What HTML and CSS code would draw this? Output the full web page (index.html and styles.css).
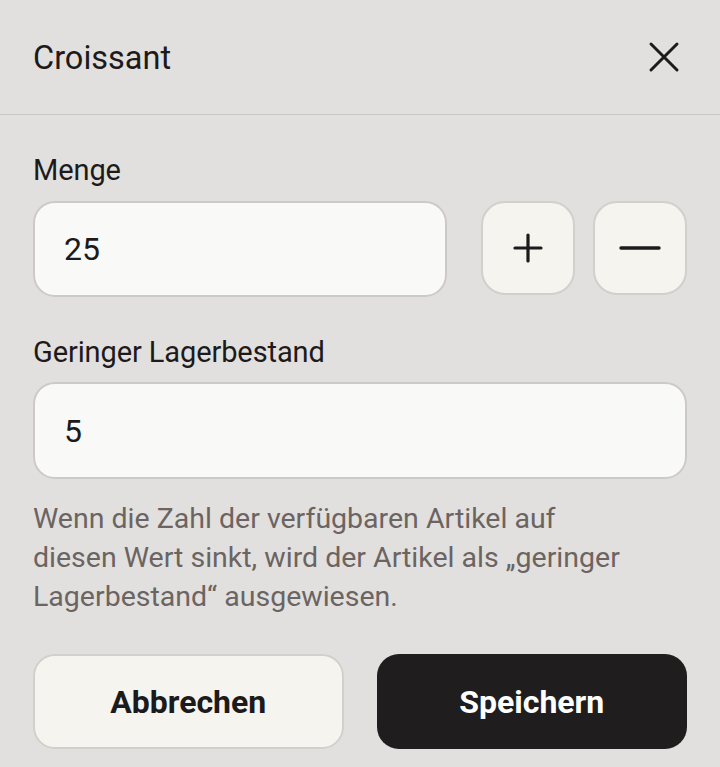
FILE: index.html
```html
<!DOCTYPE html>
<html lang="de">
<head>
<meta charset="utf-8">
<title>Croissant</title>
<link rel="stylesheet" href="styles.css">
</head>
<body>
<div class="sheet">
  <header class="sheet-header">
    <h1 class="title">Croissant</h1>
    <button class="close" aria-label="Schließen">
      <svg width="32" height="32" viewBox="0 0 32 32"><path d="M3 3 L29 29 M29 3 L3 29" stroke="#1c1a1a" stroke-width="3" stroke-linecap="round" fill="none"/></svg>
    </button>
  </header>
  <main class="content">
    <label class="label label-first">Menge</label>
    <div class="qty-row">
      <div class="field field-qty">25</div>
      <button class="step" aria-label="Erhöhen">
        <svg width="30" height="30" viewBox="0 0 30 30"><path d="M2 15 H28 M15 2 V28" stroke="#1c1a1a" stroke-width="3.2" stroke-linecap="round" fill="none"/></svg>
      </button>
      <button class="step" aria-label="Verringern">
        <svg width="42" height="6" viewBox="0 0 42 6"><path d="M2 3 H40" stroke="#1c1a1a" stroke-width="3.4" stroke-linecap="round" fill="none"/></svg>
      </button>
    </div>
    <label class="label label-second">Geringer Lagerbestand</label>
    <div class="field field-wide">5</div>
    <p class="hint">Wenn die Zahl der verfügbaren Artikel auf diesen Wert sinkt, wird der Artikel als „geringer Lagerbestand“ ausgewiesen.</p>
    <div class="actions">
      <button class="btn btn-secondary">Abbrechen</button>
      <button class="btn btn-primary">Speichern</button>
    </div>
  </main>
</div>
</body>
</html>
```

FILE: styles.css
```css
* { box-sizing: border-box; }
html, body { margin: 0; padding: 0; }
body {
  background: #e2e0de;
  font-family: Roboto, "Liberation Sans", sans-serif;
  color: #1c1a1a;
  width: 720px;
  height: 767px;
  overflow: hidden;
}
.sheet-header {
  height: 115px;
  padding: 0 40px 0 33px;
  display: flex;
  align-items: center;
  justify-content: space-between;
  border-bottom: 1px solid #c9c7c5;
}
.title {
  margin: 0;
  font-size: 32.5px;
  font-weight: 400;
  letter-spacing: 0;
  padding-top: 1px;
}
.close {
  border: 0;
  background: none;
  padding: 0;
  width: 32px;
  height: 32px;
  display: flex;
}
.content {
  padding: 0 33px;
  display: flex;
  flex-direction: column;
}
.label {
  font-size: 29px;
  line-height: 34px;
  letter-spacing: -0.1px;
  color: #1c1a1a;
}
.label-first { margin-top: 38px; }
.label-second { margin-top: 38px; }
.qty-row {
  margin-top: 14px;
  display: flex;
  align-items: flex-start;
}
.field {
  height: 96px;
  background: #f9f9f7;
  border: 2px solid #cdcac6;
  border-radius: 22px;
  padding: 0 29px;
  display: flex;
  align-items: center;
  font-size: 32px;
  color: #1c1a1a;
}
.field-qty { width: 414px; }
.field-wide { margin-top: 13px; height: 97px; }
.step {
  width: 94px;
  height: 94px;
  margin-left: 34px;
  border: 2px solid #d3d0cb;
  border-radius: 24px;
  background: #f5f4ef;
  display: flex;
  align-items: center;
  justify-content: center;
  padding: 0;
}
.step + .step { margin-left: 18px; }
.hint {
  margin: 20px 0 0;
  max-width: 605px;
  font-size: 28.5px;
  line-height: 39px;
  letter-spacing: 0;
  color: #6b6462;
}
.actions {
  margin-top: 38px;
  display: grid;
  grid-template-columns: 1fr 1fr;
  gap: 33px;
}
.btn {
  height: 95px;
  border-radius: 22px;
  font-family: Roboto, "Liberation Sans", sans-serif;
  font-size: 32px;
  font-weight: 700;
  letter-spacing: 0;
  padding: 0;
}
.btn-secondary {
  background: #f5f4ef;
  border: 2px solid #d3d0cb;
  color: #1c1a1a;
}
.btn-primary {
  background: #1f1d1d;
  border: 0;
  color: #ffffff;
}
```
